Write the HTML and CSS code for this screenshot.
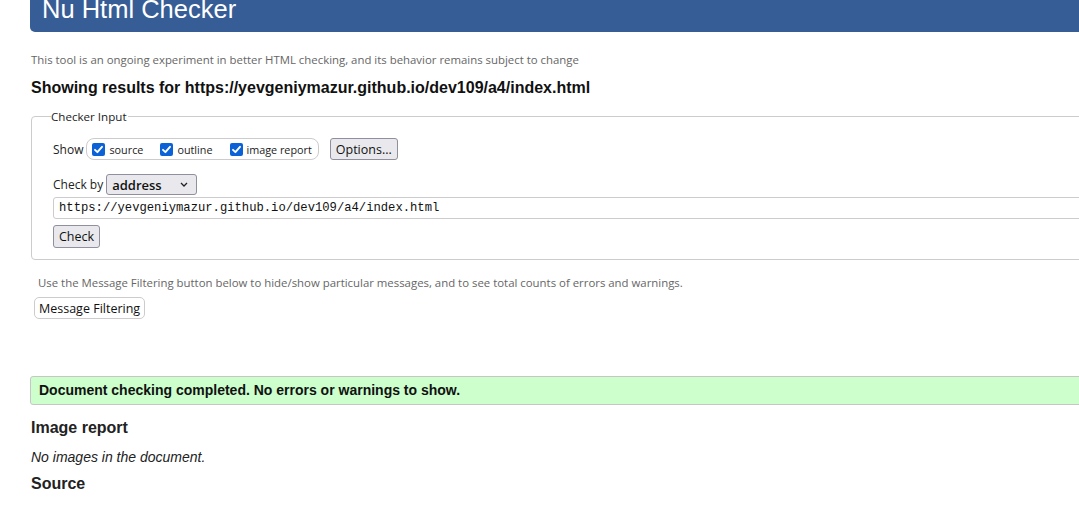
FILE: index.html
```html
<!DOCTYPE html>
<html lang="en">
<head>
<meta charset="utf-8">
<title>Nu Html Checker</title>
<link rel="stylesheet" href="styles.css">
</head>
<body>
<div class="page">
  <header class="banner"><h1 class="title">Nu Html Checker</h1></header>
  <p class="intro">This tool is an ongoing experiment in better HTML checking, and its behavior remains subject to change</p>
  <h2 class="results">Showing results for https://yevgeniymazur.github.io/dev109/a4/index.html</h2>
  <fieldset class="checker">
    <legend class="legend">Checker Input</legend>
    <div class="row show-row">
      <span class="label">Show</span>
      <span class="group">
        <span class="opt"><span class="box"><svg viewBox="0 0 13 13" width="13" height="13"><path d="M3 6.8 L5.4 9.2 L10 3.8" fill="none" stroke="#fff" stroke-width="1.9" stroke-linecap="round" stroke-linejoin="round"/></svg></span>source</span>
        <span class="opt"><span class="box"><svg viewBox="0 0 13 13" width="13" height="13"><path d="M3 6.8 L5.4 9.2 L10 3.8" fill="none" stroke="#fff" stroke-width="1.9" stroke-linecap="round" stroke-linejoin="round"/></svg></span>outline</span>
        <span class="opt"><span class="box"><svg viewBox="0 0 13 13" width="13" height="13"><path d="M3 6.8 L5.4 9.2 L10 3.8" fill="none" stroke="#fff" stroke-width="1.9" stroke-linecap="round" stroke-linejoin="round"/></svg></span>image report</span>
      </span>
      <span class="btn options">Options...</span>
    </div>
    <div class="row by-row">
      <span class="label">Check by</span>
      <span class="select">address<svg class="chev" viewBox="0 0 8 5" width="8" height="5"><path d="M1 1 L4 4 L7 1" fill="none" stroke="#222" stroke-width="1.3"/></svg></span>
    </div>
    <div class="url">https://yevgeniymazur.github.io/dev109/a4/index.html</div>
    <span class="btn check">Check</span>
  </fieldset>
  <p class="filter-note">Use the Message Filtering button below to hide/show particular messages, and to see total counts of errors and warnings.</p>
  <span class="filter-btn">Message Filtering</span>
  <div class="success">Document checking completed. No errors or warnings to show.</div>
  <h2 class="section">Image report</h2>
  <p class="noimg">No images in the document.</p>
  <h2 class="section">Source</h2>
</div>
</body>
</html>
```
FILE: styles.css
```css
html, body {
  margin: 0;
  padding: 0;
  overflow: hidden;
  background: #fff;
}
body {
  font-family: "Liberation Sans", Arial, sans-serif;
  color: #111;
}
.page {
  width: 1300px;
  padding-left: 30px;
  display: flex;
  flex-direction: column;
  align-items: flex-start;
}
.banner {
  align-self: stretch;
  background: #365d95;
  height: 32px;
  border-bottom-left-radius: 5px;
  overflow: hidden;
}
.title {
  margin: -6px 0 0 12px;
  font-size: 25.5px;
  font-weight: normal;
  color: #fff;
  line-height: 30px;
}
.intro {
  margin: 20px 0 0 1px;
  font-family: "Open Sans", sans-serif;
  font-size: 11.4px;
  color: #666;
  line-height: 16px;
}
.results {
  margin: 10px 0 0 1px;
  font-size: 16px;
  font-weight: bold;
  color: #111;
  line-height: 20px;
}
.checker {
  align-self: stretch;
  margin: 11px 0 0 1px;
  border: 1px solid #ccc;
  border-radius: 4px;
  padding: 14px 20px 11px 21px;
  display: flex;
  flex-direction: column;
  align-items: flex-start;
}
.legend {
  font-family: "Open Sans", sans-serif;
  font-size: 11.6px;
  color: #222;
  padding: 0 1px 0 0;
  margin-left: -2px;
}
.row {
  display: flex;
  align-items: center;
}
.label {
  font-family: "Open Sans", sans-serif;
  font-size: 12px;
  color: #222;
  margin-right: 3px;
}
.show-row {
  height: 22px;
}
.group {
  display: flex;
  align-items: center;
  height: 20px;
  border: 1px solid #ccc;
  border-radius: 8px;
  padding: 0 6px 0 5px;
  gap: 17px;
}
.opt {
  display: flex;
  align-items: center;
  font-family: "Open Sans", sans-serif;
  font-size: 10.8px;
  color: #222;
}
.box {
  width: 13px;
  height: 13px;
  border-radius: 2px;
  background: #0b62d6;
  margin-right: 4px;
  display: flex;
}
.btn {
  font-family: "Open Sans", sans-serif;
  font-size: 12.5px;
  color: #111;
  background: #e9e9ed;
  border: 1px solid #8f8f9d;
  border-radius: 3px;
  display: inline-flex;
  align-items: center;
  box-sizing: border-box;
}
.options {
  margin-left: 11px;
  height: 22px;
  padding: 0 5px;
}
.by-row {
  margin-top: 14px;
}
.select {
  width: 91px;
  height: 21px;
  box-sizing: border-box;
  border: 1px solid #8f8f9d;
  border-radius: 3px;
  background: #e9e9ed;
  font-family: "Open Sans", sans-serif;
  font-size: 13px;
  font-weight: 600;
  color: #111;
  display: flex;
  align-items: center;
  justify-content: space-between;
  padding: 0 8px 0 5px;
}
.chev {
  display: block;
}
.url {
  align-self: stretch;
  margin-top: 2px;
  height: 22px;
  box-sizing: border-box;
  border: 1px solid #ccc;
  border-radius: 3px;
  font-family: "Liberation Mono", monospace;
  font-size: 12.2px;
  line-height: 20px;
  padding-left: 5px;
  color: #111;
}
.check {
  margin-top: 6px;
  height: 23px;
  padding: 0 5px;
}
.filter-note {
  margin: 15px 0 0 8px;
  font-family: "Open Sans", sans-serif;
  font-size: 11.4px;
  color: #666;
  line-height: 16px;
}
.filter-btn {
  margin: 6px 0 0 4px;
  font-family: "Open Sans", sans-serif;
  font-size: 12.5px;
  color: #111;
  background: #fff;
  border: 1px solid #ccc;
  border-radius: 5px;
  height: 22px;
  box-sizing: border-box;
  display: inline-flex;
  align-items: center;
  padding: 0 4px;
}
.success {
  align-self: stretch;
  margin-top: 57px;
  height: 29px;
  box-sizing: border-box;
  background: #ccffcc;
  border: 1px solid #c6c6c6;
  border-radius: 3px;
  padding-left: 8px;
  font-size: 14px;
  font-weight: bold;
  color: #111;
  line-height: 27px;
}
.section {
  margin: 13px 0 0 1px;
  font-size: 16px;
  font-weight: bold;
  color: #222;
  line-height: 20px;
}
.noimg {
  margin: 10px 0 0 1px;
  font-size: 14px;
  font-style: italic;
  color: #222;
  line-height: 18px;
}
.noimg + .section {
  margin-top: 8px;
}
```
